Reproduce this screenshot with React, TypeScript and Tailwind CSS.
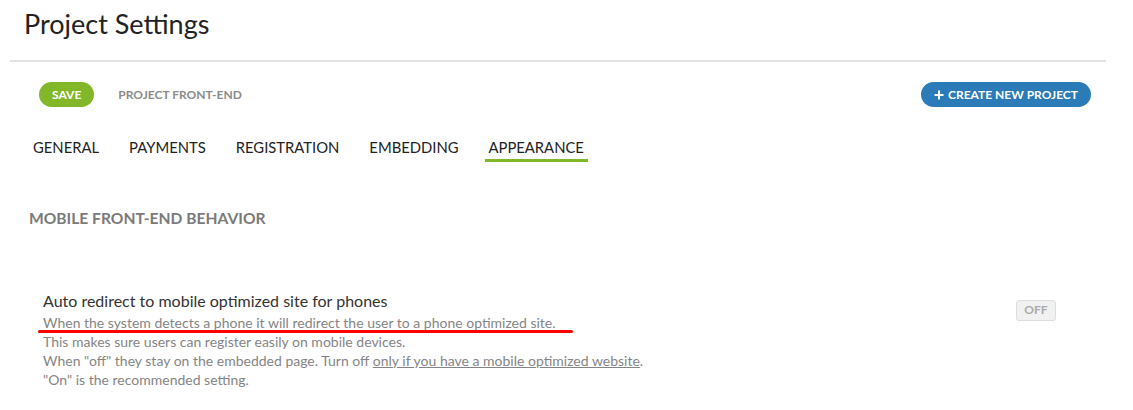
import React from "react";

const tabs = ["GENERAL", "PAYMENTS", "REGISTRATION", "EMBEDDING", "APPEARANCE"];

const App = () => {
  const active = "APPEARANCE";

  return (
    <div className="w-[1133px] h-[410px] bg-white font-['Lato',sans-serif] overflow-hidden">
      {/* Header */}
      <div className="pl-[24px] pt-[6px] h-[60px]">
        <h1 className="text-[27px] leading-[36px] text-[#222]">Project Settings</h1>
      </div>
      <div className="ml-[10px] w-[1096px] h-[2px] bg-[#e3e3e3]" />

      {/* Toolbar */}
      <div className="flex items-center justify-between pl-[39px] pr-[42px] mt-[20px]">
        <div className="flex items-center gap-[24px]">
          <button className="h-[25px] px-[13px] rounded-full bg-[#82b72a] text-white text-[12px] font-bold">
            SAVE
          </button>
          <span className="text-[12px] font-bold text-[#8b8b8b]">PROJECT FRONT-END</span>
        </div>
        <button className="h-[25px] px-[13px] rounded-full bg-[#2b7bb9] text-white text-[12px] font-bold flex items-center gap-[4px]">
          <svg width="10" height="10" viewBox="0 0 10 10">
            <path d="M5 0.5v9M0.5 5h9" stroke="white" strokeWidth="2" />
          </svg>
          CREATE NEW PROJECT
        </button>
      </div>

      {/* Tabs */}
      <div className="flex gap-[22px] pl-[29px] mt-[29px]">
        {tabs.map((t) => (
          <div
            key={t}
            className={`px-[4px] pb-[1px] text-[14.8px] text-[#222] border-b-[3px] ${
              t === active ? "border-[#82b72a]" : "border-transparent"
            }`}
          >
            {t}
          </div>
        ))}
      </div>

      {/* Section */}
      <div className="pl-[29px] mt-[45px] text-[15.6px] font-bold text-[#7a7a7a]">
        MOBILE FRONT-END BEHAVIOR
      </div>

      <div className="flex justify-between pl-[43px] pr-[77px] mt-[57px]">
        <div className="relative">
          <div className="text-[16px] leading-[25px] text-[#333]">
            Auto redirect to mobile optimized site for phones
          </div>
          <div className="text-[14px] leading-[19px] text-[#858585]">
            <div>When the system detects a phone it will redirect the user to a phone optimized site.</div>
            <div>This makes sure users can register easily on mobile devices.</div>
            <div>
              When "off" they stay on the embedded page. Turn off{" "}
              <span className="underline">only if you have a mobile optimized website</span>.
            </div>
            <div>"On" is the recommended setting.</div>
          </div>
          <div className="absolute left-[-5px] top-[42px] w-[535px] h-[3px] rounded-full bg-[#ff0000]" />
        </div>
        <div className="mt-[12px] h-[21px] w-[40px] flex items-center justify-center border border-[#ddd] bg-[#f1f1f1] rounded-[3px] text-[12px] font-bold text-[#aaa]">
          OFF
        </div>
      </div>
    </div>
  );
};

export default App;
